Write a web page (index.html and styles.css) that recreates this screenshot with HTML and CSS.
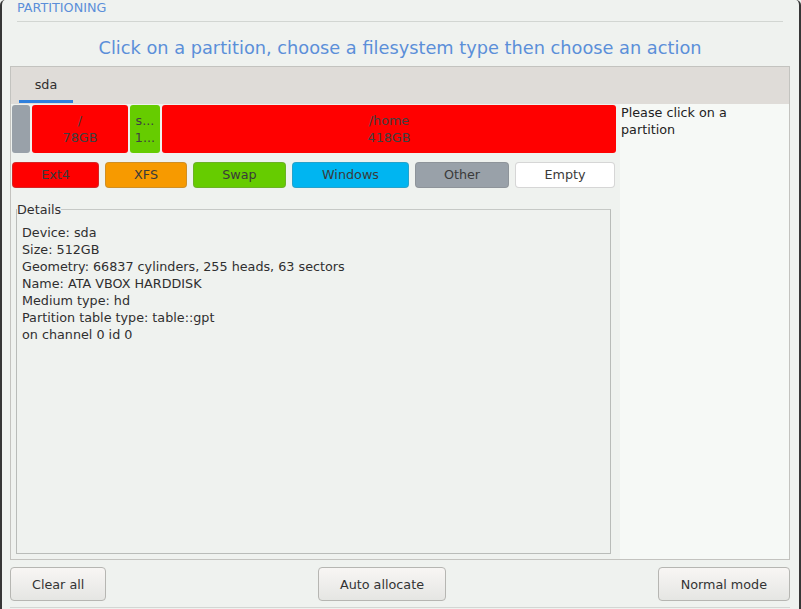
FILE: index.html
```html
<!DOCTYPE html>
<html>
<head>
<meta charset="utf-8">
<link rel="stylesheet" href="styles.css">
</head>
<body>
<div class="window">
  <div class="title">PARTITIONING</div>
  <div class="rule"></div>
  <h1 class="heading">Click on a partition, choose a filesystem type then choose an action</h1>
  <div class="notebook">
    <div class="tabbar">
      <div class="tab active">sda</div>
    </div>
    <div class="page">
      <div class="main">
        <div class="diskbar">
          <div class="part other" style="width:18px"></div>
          <div class="part ext4" style="width:96px"><span>/</span><span>78GB</span></div>
          <div class="part swap" style="width:30px"><span>s...</span><span>1...</span></div>
          <div class="part ext4 grow"><span>/home</span><span>418GB</span></div>
        </div>
        <div class="legend">
          <div class="key ext4 k1">Ext4</div>
          <div class="key xfs k2">XFS</div>
          <div class="key swap k3">Swap</div>
          <div class="key windows k4">Windows</div>
          <div class="key other k5">Other</div>
          <div class="key empty k6">Empty</div>
        </div>
        <fieldset class="details">
          <legend>Details</legend>
          <div class="info-lines">
            <div>Device: sda</div>
            <div>Size: 512GB</div>
            <div>Geometry: 66837 cylinders, 255 heads, 63 sectors</div>
            <div>Name: ATA VBOX HARDDISK</div>
            <div>Medium type: hd</div>
            <div>Partition table type: table::gpt</div>
            <div>on channel 0 id 0</div>
          </div>
        </fieldset>
      </div>
      <div class="side"><div class="side-text">Please click on a partition</div></div>
    </div>
  </div>
  <div class="actions">
    <button class="btn">Clear all</button>
    <button class="btn">Auto allocate</button>
    <button class="btn btn-wide">Normal mode</button>
  </div>
  <div class="next"></div>
</div>
</body>
</html>
```
FILE: styles.css
```css
html, body {
  margin: 0;
  padding: 0;
  background: #eff2ef;
}
body {
  font-family: "DejaVu Sans", sans-serif;
  font-size: 12.75px;
  color: #2f2f2f;
}
.window {
  width: 801px;
  height: 609px;
  box-sizing: border-box;
  border-left: 2px solid #363636;
  border-right: 2px solid #363636;
  border-top-left-radius: 5px;
  border-top-right-radius: 5px;
  padding: 0 9px 0 8px;
  background: #eff2ef;
  overflow: hidden;
  display: flex;
  flex-direction: column;
}
.title {
  margin: 0 7px;
  height: 15px;
  line-height: 15px;
  color: #5b8fd9;
}
.rule {
  margin: 6px 7px 0;
  border-top: 1px solid #d2d6d2;
}
.heading {
  margin: 16px 0 0;
  font-size: 17.75px;
  font-weight: normal;
  line-height: 20px;
  text-align: center;
  color: #5b8fd9;
}
.notebook {
  margin-top: 8px;
  height: 494px;
  box-sizing: border-box;
  border: 1px solid #c3c3bf;
  display: flex;
  flex-direction: column;
}
.tabbar {
  height: 37px;
  background: #dfdcd8;
  display: flex;
  flex: none;
}
.tab {
  margin-left: 8px;
  width: 54px;
  height: 36px;
  box-sizing: border-box;
  padding-top: 10px;
  line-height: 15px;
  text-align: center;
  color: #2f2f2f;
}
.tab.active {
  border-bottom: 3px solid #2f7fdc;
}
.page {
  flex: 1;
  display: flex;
  min-height: 0;
}
.main {
  flex: 1;
  padding: 1px 4px 0 1px;
  display: flex;
  flex-direction: column;
  min-width: 0;
}
.side {
  width: 169px;
  background: #f6f9f6;
  padding-left: 1px;
  line-height: 17px;
  color: #222;
  box-sizing: border-box;
}
.side-text {
  max-width: 130px;
}
.diskbar {
  display: flex;
  gap: 2px;
  height: 48px;
}
.part {
  border-radius: 3px;
  display: flex;
  flex-direction: column;
  justify-content: center;
  align-items: center;
  line-height: 17px;
  color: #404040;
  overflow: hidden;
  white-space: nowrap;
  flex: none;
}
.part.grow {
  flex: 1;
}
.ext4 { background: #ff0000; }
.swap { background: #66cc00; }
.xfs { background: #f79a00; }
.windows { background: #00b5f1; }
.other { background: #99a1a9; }
.empty { background: #ffffff; }
.legend {
  margin-top: 9px;
  display: flex;
  gap: 6px;
  height: 26px;
}
.key {
  box-sizing: border-box;
  border: 1px solid rgba(120, 120, 120, 0.3);
  border-radius: 4px;
  text-align: center;
  line-height: 24px;
  color: #3a3a3a;
}
.k1 { width: 87px; }
.k2 { width: 82px; }
.k3 { width: 93px; }
.k4 { width: 117px; }
.k5 { width: 94px; }
.k6 { width: 100px; }
.details {
  flex: 1;
  min-width: 0;
  margin: 14px 5px 5px 4px;
  padding: 7px 5px 0 5px;
  border: 1px solid #b9bcb9;
  border-top-color: #c6c9c6;
}
.details legend {
  padding: 0;
  margin-left: -5px;
  line-height: 15px;
  color: #2f2f2f;
}
.info-lines {
  line-height: 17px;
  color: #2f2f2f;
}
.actions {
  margin-top: 7px;
  display: flex;
  justify-content: space-between;
  height: 34px;
}
.btn {
  height: 34px;
  box-sizing: border-box;
  padding: 0 21px;
  border: 1px solid #b6b6b2;
  border-radius: 4px;
  background: linear-gradient(#f8f6f4, #e5e6e3);
  font-family: "DejaVu Sans", sans-serif;
  font-size: 12.75px;
  color: #333;
}
.btn-wide {
  padding: 0 22px;
}
.next {
  margin-top: 6px;
  border-top: 1px solid #d3d6d3;
}
```
